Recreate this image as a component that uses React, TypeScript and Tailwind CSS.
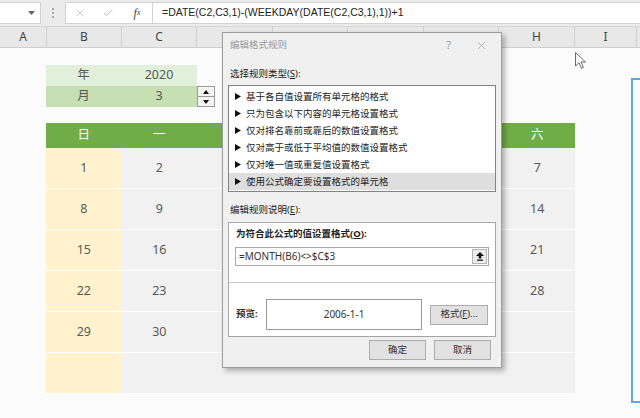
import React from "react";
import { X, Check } from "lucide-react";

const FONT = "font-['Noto_Sans','Noto_Sans_CJK_SC',sans-serif]";

// columns D-G sit under the dialog, so their labels are not shown
const columns = [
  { label: "A", w: "w-[47px]" },
  { label: "B", w: "w-[75px]" },
  { label: "C", w: "w-[75px]" },
  { label: "", w: "w-[76px]" },
  { label: "", w: "w-[75px]" },
  { label: "", w: "w-[76px]" },
  { label: "", w: "w-[75px]" },
  { label: "H", w: "w-[76px]" },
  { label: "I", w: "w-[62px]" },
];

const weekdays = ["日", "一", "", "", "", "", "六"];
const visibleCols = [0, 1, 6];

// March 2020 starts on a Sunday; other months are hidden by the rule
const weeks: (number | null)[][] = Array.from({ length: 6 }, (_, r) =>
  Array.from({ length: 7 }, (_, c) => {
    const d = r * 7 + c + 1;
    return d <= 31 && visibleCols.includes(c) ? d : null;
  })
);

const ruleTypes = [
  "基于各自值设置所有单元格的格式",
  "只为包含以下内容的单元格设置格式",
  "仅对排名靠前或靠后的数值设置格式",
  "仅对高于或低于平均值的数值设置格式",
  "仅对唯一值或重复值设置格式",
  "使用公式确定要设置格式的单元格",
];

const Tri = () => (
  <svg width="6" height="7" viewBox="0 0 6 7" className="flex-shrink-0">
    <path d="M0 0 L6 3.5 L0 7 Z" fill="#111" />
  </svg>
);

const FormulaBar = () => (
  <div className="flex h-[27px] items-center bg-[#ebebeb] border-b border-[#d6d6d6]">
    <div className="flex h-[22px] w-[41px] items-center justify-end bg-white border border-l-0 border-[#d2d2d2] pr-[5px]">
      <svg width="7" height="4" viewBox="0 0 7 4">
        <path d="M0 0 L7 0 L3.5 4 Z" fill="#666" />
      </svg>
    </div>
    <div className="flex w-[24px] justify-center">
      <svg width="2" height="10" viewBox="0 0 2 10">
        <rect x="0" y="0" width="2" height="2" fill="#aaa" />
        <rect x="0" y="4" width="2" height="2" fill="#aaa" />
        <rect x="0" y="8" width="2" height="2" fill="#aaa" />
      </svg>
    </div>
    <div className="flex h-[22px] w-[88px] items-center bg-white border border-[#d2d2d2]">
      <div className="flex w-[28px] justify-center">
        <X className="w-[12px] h-[12px] text-[#b4b4b4]" strokeWidth={1.4} />
      </div>
      <div className="flex w-[28px] justify-center">
        <Check className="w-[12px] h-[12px] text-[#b4b4b4]" strokeWidth={1.6} />
      </div>
      <div className="flex w-[30px] justify-center font-['Liberation_Serif',serif] italic text-[12px] text-[#444]">
        f<span className="text-[8px] mt-[3px]">x</span>
      </div>
    </div>
    <div className="flex h-[22px] flex-1 items-center bg-white border border-l-0 border-r-0 border-[#d2d2d2] pl-[9px] text-[10.5px] text-[#222] font-['Liberation_Sans',sans-serif]">
      =DATE(C2,C3,1)-(WEEKDAY(DATE(C2,C3,1),1))+1
    </div>
  </div>
);

const ColumnHeaders = () => (
  <div className="flex h-[21px] bg-[#e8e8e8] border-b border-[#cfcfcf]">
    {columns.map((c, i) => (
      <div
        key={i}
        className={`${c.w} flex-shrink-0 flex items-center justify-center border-r border-[#d0d0d0] text-[12px] text-[#444]`}
      >
        {c.label}
      </div>
    ))}
    <div className="flex-1" />
  </div>
);

const Spinner = () => (
  <div className="flex w-[18px] flex-col border border-[#9a9a9a] bg-[#f4f4f4]">
    <div className="flex h-[10px] items-center justify-center border-b border-[#9a9a9a]">
      <svg width="6" height="4" viewBox="0 0 6 4">
        <path d="M0 4 L3 0 L6 4 Z" fill="#111" />
      </svg>
    </div>
    <div className="flex flex-1 items-center justify-center">
      <svg width="6" height="4" viewBox="0 0 6 4">
        <path d="M0 0 L6 0 L3 4 Z" fill="#111" />
      </svg>
    </div>
  </div>
);

const Sheet = () => (
  <div className="relative h-[370px] bg-[#fbfbfb] pt-[17px] pl-[46px]">
    {/* Year / month inputs */}
    <div className="flex h-[21px] w-[151px] bg-[#e2efda] text-[12.5px] text-[#595959]">
      <div className="flex w-[75px] items-center justify-center">年</div>
      <div className="flex w-[76px] items-center justify-center">2020</div>
    </div>
    <div className="flex h-[21px]">
      <div className="flex w-[151px] bg-[#c6e0b4] text-[12.5px] text-[#595959]">
        <div className="flex w-[75px] items-center justify-center">月</div>
        <div className="flex w-[76px] items-center justify-center">3</div>
      </div>
      <Spinner />
    </div>

    {/* Calendar */}
    <div className="mt-[16px] w-[529px]">
      <div className="grid h-[25px] grid-cols-7 bg-[#70ad47] text-[12.5px] text-white">
        {weekdays.map((d, i) => (
          <div key={i} className="flex items-center justify-center">
            {d}
          </div>
        ))}
      </div>
      {weeks.map((week, r) => (
        <div key={r} className="grid h-[41px] grid-cols-7 border-b border-white text-[12.5px] text-[#595959]">
          {week.map((d, c) => (
            <div
              key={c}
              className={`flex items-center justify-center ${c === 0 ? "bg-[#fff2cc]" : "bg-[#f1f1f1]"}`}
            >
              {r < 5 ? d : ""}
            </div>
          ))}
        </div>
      ))}
    </div>

    {/* Selection outline */}
    <div className="absolute left-[631px] top-[30px] h-[325px] w-[20px] border-2 border-[#5aa6f0]" />

    {/* Mouse cursor */}
    <svg className="absolute left-[575px] top-[4px]" width="12" height="18" viewBox="0 0 12 18">
      <path d="M0.5 0.5 L0.5 14 L4 10.8 L6.4 16.4 L8.4 15.5 L6 10 L10.5 10 Z" fill="#fff" stroke="#6a6a6a" strokeWidth="1" />
    </svg>
  </div>
);

const Btn = ({ children, className = "" }: { children: React.ReactNode; className?: string }) => (
  <div
    className={`flex h-[20px] items-center justify-center border border-[#adadad] bg-[#e1e1e1] text-[9.5px] text-[#333] ${className}`}
  >
    {children}
  </div>
);

const Dialog = () => (
  <div className="absolute left-[222px] top-[32px] w-[280px] border border-[#9c9c9c] bg-[#f0f0f0] px-[5px] pb-[7px] shadow-[3px_3px_5px_rgba(0,0,0,0.28)] text-[9.5px] text-[#222]">
    {/* Title bar */}
    <div className="flex h-[24px] items-center justify-between pl-[2px]">
      <span className="text-[#9a9a9a]">编辑格式规则</span>
      <div className="flex items-center gap-[24px] pr-[8px] text-[#9a9a9a]">
        <span className="text-[11px]">?</span>
        <X className="w-[13px] h-[13px]" strokeWidth={1.2} />
      </div>
    </div>

    <div className="mt-[10px] h-[14px] pl-[2px] leading-[14px]">
      选择规则类型(<span className="underline">S</span>):
    </div>

    {/* Rule type list */}
    <div className="mt-[4px] h-[107px] border border-[#828282] bg-white pt-[2px]">
      {ruleTypes.map((t, i) => (
        <div
          key={t}
          className={`flex h-[17px] items-center gap-[5px] pl-[6px] leading-[12px] ${i === ruleTypes.length - 1 ? "bg-[#dedede]" : ""}`}
        >
          <Tri />
          <span>{t}</span>
        </div>
      ))}
    </div>

    <div className="mt-[11px] h-[14px] pl-[2px] leading-[14px]">
      编辑规则说明(<span className="underline">E</span>):
    </div>

    {/* Rule description panel */}
    <div className="mt-[5px] border border-[#a6a6a6] bg-white">
      <div className="mt-[4px] h-[14px] pl-[7px] leading-[14px] font-bold">
        为符合此公式的值设置格式(<span className="underline">O</span>):
      </div>
      <div className="mx-[6px] mt-[6px] flex h-[19px] items-center border border-[#a8a8a8] bg-white">
        <span className="flex-1 pl-[3px] text-[10px] text-[#333]">=MONTH(B6)&lt;&gt;$C$3</span>
        <div className="mr-[1px] flex h-[15px] w-[15px] items-center justify-center border border-[#b4b4b4] bg-[#ececec]">
          <svg width="8" height="9" viewBox="0 0 8 9">
            <path d="M4 0 L8 4 L5.3 4 L5.3 6.5 L2.7 6.5 L2.7 4 L0 4 Z" fill="#111" />
            <rect x="1" y="7.6" width="6" height="1.2" fill="#111" />
          </svg>
        </div>
      </div>
      <div className="mt-[16px] border-t border-[#c8c8c8]" />
      <div className="mt-[16px] mb-[6px] flex items-center pl-[7px] pr-[7px]">
        <span className="w-[30px] font-bold text-[#333]">预览:</span>
        <div className="flex h-[31px] w-[157px] items-center justify-center border border-[#9a9a9a] bg-white text-[10px] text-[#333]">
          2006-1-1
        </div>
        <Btn className="ml-[8px] h-[19px] w-[58px]">
          格式(<span className="underline">F</span>)...
        </Btn>
      </div>
    </div>

    {/* Footer buttons */}
    <div className="mt-[3px] flex justify-end gap-[8px] pr-[5px]">
      <Btn className="w-[57px]">确定</Btn>
      <Btn className="w-[57px]">取消</Btn>
    </div>
  </div>
);

const App = () => (
  <div className={`relative h-[418px] w-[640px] overflow-hidden bg-[#fbfbfb] ${FONT}`}>
    <FormulaBar />
    <ColumnHeaders />
    <Sheet />
    <Dialog />
  </div>
);

export default App;
